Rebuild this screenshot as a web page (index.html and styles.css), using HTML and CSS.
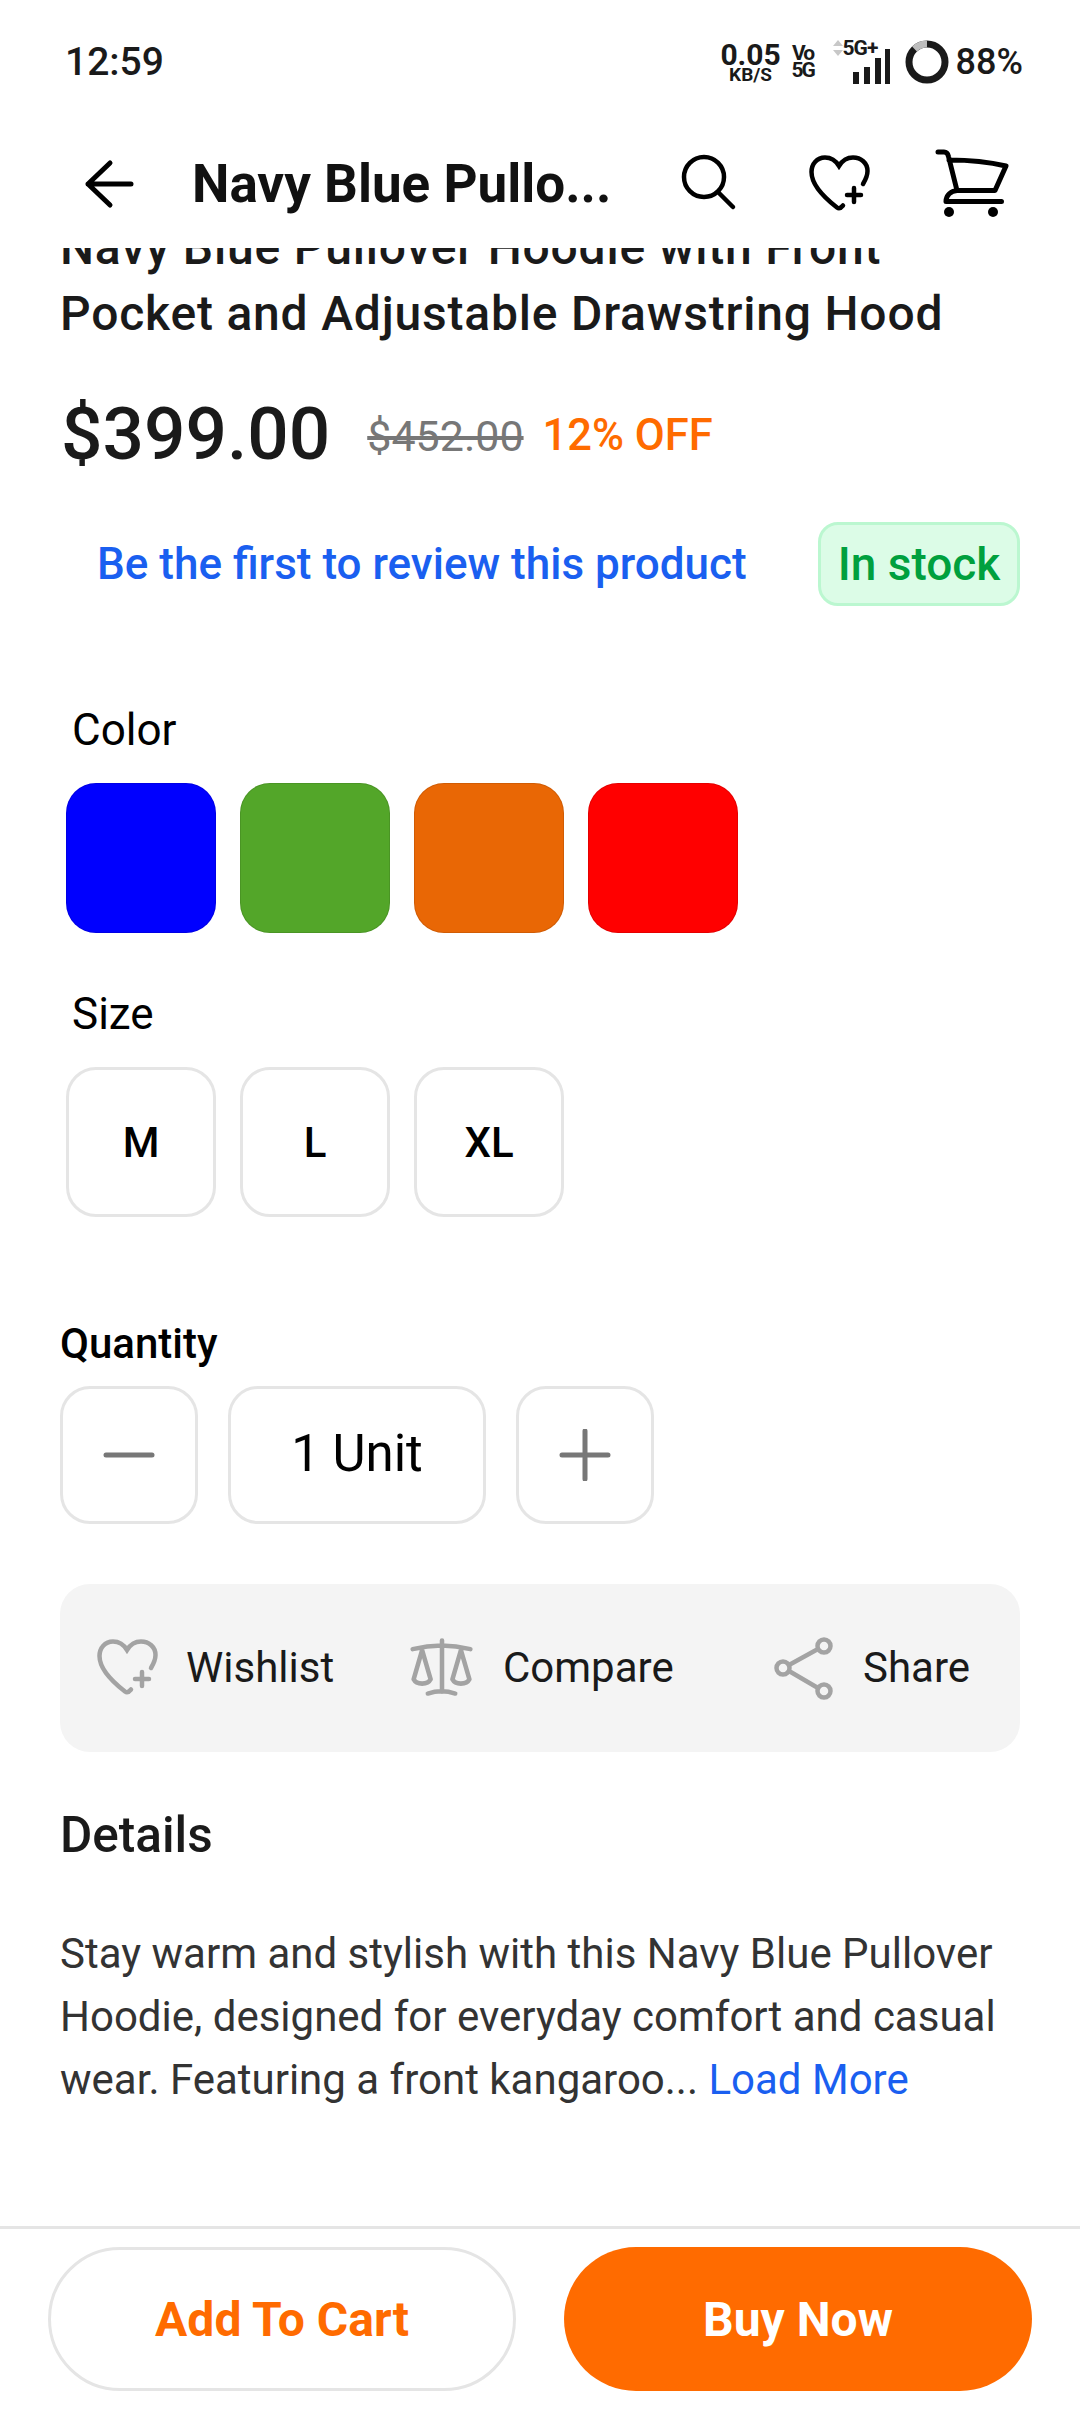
FILE: index.html
```html
<!DOCTYPE html>
<html>
<head>
	<title>Product Details</title>
	<link rel="stylesheet" href="styles.css">
</head>
<body>
<div class="page">
	<div class="status-bar">
		<span class="time">12:59</span>
		<div class="status-icons">
			<div class="net-speed"><span class="speed-value">0.05</span><span class="speed-unit">KB/S</span></div>
			<div class="volte"><span>Vo</span><span>5G</span></div>
			<div class="signal">
				<svg class="signal-arrows" width="14" height="16" viewBox="0 0 14 16"><path d="M7 0l5 6H2zM7 16l-5-6h10z" fill="#c8c8c8"/></svg>
				<span class="signal-label">5G+</span>
				<svg class="signal-bars" width="40" height="36" viewBox="0 0 40 36"><path d="M3 36V24h6v12zM14 36V19h6v17zM25 36V10h6v26zM35 36V1h6v35z" fill="#1a1a1a"/></svg>
			</div>
			<svg class="battery" width="44" height="44" viewBox="0 0 44 44">
				<circle cx="22" cy="22" r="18" fill="none" stroke="#1a1a1a" stroke-width="7"/>
				<path d="M22 4A18 18 0 0 0 9.5 9" fill="none" stroke="#bdbdbd" stroke-width="7"/>
			</svg>
			<span class="battery-level">88%</span>
		</div>
	</div>

	<div class="top-bar">
		<svg class="back-icon" width="54" height="54" viewBox="0 0 54 54" fill="none" stroke="#000" stroke-width="5" stroke-linecap="round" stroke-linejoin="round"><path d="M7 27h43M29 6L7 27l22 21"/></svg>
		<span class="top-title">Navy Blue Pullo...</span>
		<svg class="top-search" width="60" height="64" viewBox="0 0 60 64" fill="none" stroke="#000" stroke-width="4.500" stroke-linecap="round"><circle cx="24" cy="25" r="20"/><path d="M38 40l15 15"/></svg>
		<svg class="top-heart" width="70" height="70" viewBox="0 0 70 70" fill="none" stroke="#000" stroke-width="4.500" stroke-linecap="round"><path d="M59 35C62 30 63.500 27 63.500 22 63.500 14 57 8.500 49 8.500 43 8.500 38 12 35 17 32 12 27 8.500 21 8.500 13 8.500 7.500 15 7.500 23 7.500 36 22 50 33 58.500 35 60 37 59 39 56.500"/><path d="M50 39v14M43 46h14"/></svg>
		<svg class="top-cart" width="85" height="80" viewBox="0 0 85 80" fill="none" stroke="#000" stroke-width="5" stroke-linecap="round" stroke-linejoin="round"><path d="M8 7h6c2.500 0 4 2 4.500 4.500L27 45.500M19 15c20 0 40 2 57 6l-11 24.500H27C21 46 16 50 16 56.500h55.500"/><circle cx="19" cy="67" r="5" fill="#000" stroke="none"/><circle cx="63" cy="67" r="5" fill="#000" stroke="none"/></svg>
	</div>

	<div class="content">
		<h1 class="product-title">Navy Blue Pullover Hoodie with Front Pocket and Adjustable Drawstring Hood</h1>

		<div class="price-row">
			<span class="price">$399.00</span>
			<span class="old-price">$452.00</span>
			<span class="discount">12% OFF</span>
		</div>

		<div class="review-row">
			<a class="review-link">Be the first to review this product</a>
			<span class="stock-badge">In stock</span>
		</div>

		<p class="option-label">Color</p>
		<div class="option-list">
			<div class="swatch swatch-blue"></div>
			<div class="swatch swatch-green"></div>
			<div class="swatch swatch-orange"></div>
			<div class="swatch swatch-red"></div>
		</div>

		<p class="option-label size-label">Size</p>
		<div class="option-list">
			<div class="size-tile">M</div>
			<div class="size-tile">L</div>
			<div class="size-tile">XL</div>
		</div>

		<p class="quantity-label">Quantity</p>
		<div class="quantity-row">
			<div class="qty-button">
				<svg width="52" height="52" viewBox="0 0 52 52" stroke="#777" stroke-width="5" stroke-linecap="round"><path d="M3 26h46"/></svg>
			</div>
			<div class="qty-value">1 Unit</div>
			<div class="qty-button">
				<svg width="52" height="52" viewBox="0 0 52 52" stroke="#777" stroke-width="5" stroke-linecap="round"><path d="M3 26h46M26 2v48"/></svg>
			</div>
		</div>

		<div class="action-bar">
			<div class="action-item action-wishlist">
				<svg width="70" height="70" viewBox="0 0 70 70" fill="none" stroke="#a3a3a3" stroke-width="4.500" stroke-linecap="round"><path d="M59 35C62 30 63.500 27 63.500 22 63.500 14 57 8.500 49 8.500 43 8.500 38 12 35 17 32 12 27 8.500 21 8.500 13 8.500 7.500 15 7.500 23 7.500 36 22 50 33 58.500 35 60 37 59 39 56.500"/><path d="M50 39v14M43 46h14"/></svg>
				<span>Wishlist</span>
			</div>
			<div class="action-item action-compare">
				<svg width="70" height="70" viewBox="-2 -2 74 74" fill="none" stroke="#a3a3a3" stroke-width="4.800" stroke-linecap="round" stroke-linejoin="round"><path d="M35 6v54M4 15c20-5 41-5 61 0M20 62c9-3 20-3 29 0M14 16L5 47c3 6 15 6 18 0zM55 16l-9 31c3 6 15 6 18 0z"/></svg>
				<span>Compare</span>
			</div>
			<div class="action-item action-share">
				<svg width="62" height="66" viewBox="0 0 62 66" fill="none" stroke="#a3a3a3" stroke-width="4.500"><circle cx="51" cy="11" r="6.500"/><circle cx="10" cy="33" r="6.500"/><circle cx="51" cy="56" r="6.500"/><path d="M16 30l29-16M16 36l29 17"/></svg>
				<span>Share</span>
			</div>
		</div>

		<h2 class="details-title">Details</h2>
		<p class="details-text">Stay warm and stylish with this Navy Blue Pullover Hoodie, designed for everyday comfort and casual wear. Featuring a front kangaroo... <a class="load-more">Load More</a></p>
	</div>

	<div class="bottom-bar">
		<button class="cart-button">Add To Cart</button>
		<button class="buy-button">Buy Now</button>
	</div>
</div>
</body>
</html>
```

FILE: styles.css
```css
body {
	margin: 0;
	padding: 0;
	background-color: #fff;
	font-family: Roboto, "Liberation Sans", sans-serif;
	color: #1a1a1a;
}

.page {
	width: 1080px;
	height: 2412px;
	display: flex;
	flex-direction: column;
	overflow: hidden;
}

/* status bar */
.status-bar {
	height: 120px;
	box-sizing: border-box;
	flex-shrink: 0;
	display: flex;
	justify-content: space-between;
	align-items: center;
	padding: 3px 57px 0 65px;
}
.time {
	font-size: 39px;
	font-weight: 500;
}
.status-icons {
	display: flex;
	align-items: center;
}
.net-speed {
	display: flex;
	flex-direction: column;
	align-items: center;
	font-weight: 700;
	width: 60px;
}
.speed-value {
	font-size: 30px;
	line-height: 25px;
}
.speed-unit {
	font-size: 19px;
	line-height: 15px;
}
.volte {
	display: flex;
	flex-direction: column;
	align-items: center;
	width: 24px;
	margin-left: 10px;
	font-size: 21px;
	font-weight: 700;
	line-height: 17px;
	letter-spacing: -2px;
}
.signal {
	position: relative;
	width: 64px;
	height: 44px;
	margin-left: 16px;
}
.signal-arrows {
	position: absolute;
	left: 0;
	top: 0;
}
.signal-label {
	position: absolute;
	left: 12px;
	top: -4px;
	font-size: 21px;
	font-weight: 700;
	letter-spacing: -1px;
}
.signal-bars {
	position: absolute;
	left: 19px;
	top: 8px;
}
.battery {
	margin-left: 10px;
}
.battery-level {
	margin-left: 7px;
	font-size: 36px;
	font-weight: 500;
}

/* top bar */
.top-bar {
	height: 128px;
	flex-shrink: 0;
	display: flex;
	align-items: center;
	box-sizing: border-box;
	padding: 0 0 0 81px;
}
.top-title {
	width: 420px;
	margin-left: 57px;
	font-size: 53px;
	font-weight: 700;
	color: #111;
	white-space: nowrap;
}
.top-search {
	margin-left: 68px;
}
.top-heart {
	margin-left: 64px;
}
.top-cart {
	margin-left: 56px;
	margin-top: 2px;
}

/* scrolled content */
.content {
	flex: 1;
	overflow: hidden;
	padding: 0 59px 0 60px;
}
.product-title {
	margin: -33px 60px 0 0;
	font-size: 48px;
	line-height: 66px;
	font-weight: 500;
	letter-spacing: 0.800px;
}
.price-row {
	display: flex;
	align-items: center;
	height: 90px;
	margin-top: 42px;
	margin-bottom: -1px;
	padding-left: 1px;
}
.price {
	font-size: 73px;
	font-weight: 500;
}
.old-price {
	margin-left: 37px;
	font-size: 43px;
	color: #777;
	text-decoration: line-through;
	padding-top: 3px;
}
.discount {
	margin-left: 19px;
	font-size: 43.500px;
	font-weight: 500;
	color: #ff6b00;
	padding-top: 3px;
}
.review-row {
	display: flex;
	justify-content: space-between;
	align-items: center;
	margin-top: 44px;
	padding-left: 37px;
	margin-right: 1px;
}
.review-link {
	font-size: 44px;
	font-weight: 500;
	color: #1a5ff0;
}
.stock-badge {
	display: flex;
	align-items: center;
	justify-content: center;
	box-sizing: border-box;
	width: 202px;
	height: 84px;
	background-color: #dcfce7;
	border: 3px solid #bbf7d0;
	border-radius: 20px;
	font-size: 46px;
	font-weight: 500;
	color: #00a03e;
}
.option-label {
	margin: 100px 0 0 12px;
	font-size: 44px;
	line-height: 48px;
	color: #000;
}
.size-label {
	margin-top: 57px;
}
.option-list {
	display: flex;
	gap: 24px;
	margin: 29px 0 0 6px;
}
.swatch {
	width: 150px;
	height: 150px;
	box-sizing: border-box;
	border-radius: 30px;
	border: 1px solid rgba(0, 0, 0, 0.1);
}
.swatch-blue {
	background-color: #0000ff;
}
.swatch-green {
	background-color: #53a629;
}
.swatch-orange {
	background-color: #e96705;
}
.swatch-red {
	background-color: #ff0000;
}
.size-tile {
	width: 150px;
	height: 150px;
	box-sizing: border-box;
	display: flex;
	align-items: center;
	justify-content: center;
	border: 3px solid #e5e5e5;
	border-radius: 30px;
	font-size: 42px;
	font-weight: 500;
	color: #000;
}
.quantity-label {
	margin: 103px 0 0 0;
	font-size: 42px;
	line-height: 48px;
	font-weight: 500;
	color: #000;
}
.quantity-row {
	display: flex;
	gap: 30px;
	margin-top: 18px;
}
.qty-button,
.qty-value {
	height: 138px;
	box-sizing: border-box;
	display: flex;
	align-items: center;
	justify-content: center;
	border: 3px solid #e5e5e5;
	border-radius: 30px;
}
.qty-button {
	width: 138px;
}
.qty-value {
	width: 258px;
	padding-bottom: 3px;
	font-size: 51px;
	color: #000;
}
.action-bar {
	display: flex;
	align-items: center;
	height: 168px;
	margin-top: 60px;
	margin-right: 1px;
	padding: 0 0 0 32px;
	background-color: #f4f4f4;
	border-radius: 30px;
}
.action-item {
	display: flex;
	align-items: center;
	font-size: 42px;
}
.action-item span {
	margin-bottom: 2px;
}
.action-wishlist {
	width: 315px;
	gap: 24px;
}
.action-compare {
	width: 366px;
	gap: 26px;
}
.action-share {
	gap: 28px;
}
.details-title {
	margin: 53px 0 0 0;
	font-size: 49.500px;
	line-height: 60px;
	font-weight: 500;
}
.details-text {
	margin: 57px 0 0 0;
	font-size: 42px;
	line-height: 63px;
	color: #333;
}
.load-more {
	color: #1a5ff0;
}

/* bottom buttons */
.bottom-bar {
	flex-shrink: 0;
	display: flex;
	gap: 48px;
	padding: 18px 48px 21px;
	border-top: 3px solid #e5e5e5;
}
.cart-button,
.buy-button {
	flex: none;
	width: 468px;
	height: 144px;
	box-sizing: border-box;
	border-radius: 72px;
	font-family: inherit;
	font-size: 48px;
	font-weight: 700;
}
.cart-button {
	background-color: #fff;
	border: 3px solid #e5e5e5;
	color: #ff6b00;
}
.buy-button {
	background-color: #ff6b00;
	border: 0px none transparent;
	color: #fff;
}
```
